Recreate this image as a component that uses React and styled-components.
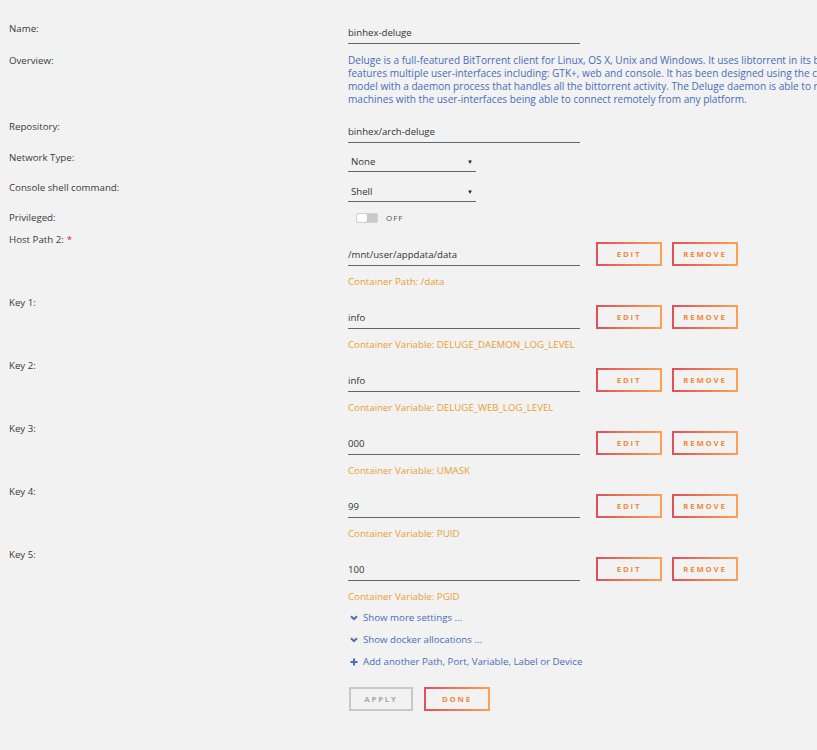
import React from "react";
import styled, { createGlobalStyle } from "styled-components";

const GlobalStyle = createGlobalStyle`
  html, body {
    margin: 0;
    background: #f2f2f2;
    overflow: hidden;
  }
  body {
    font-family: "Open Sans", "Liberation Sans", sans-serif;
    color: #3a3a3a;
  }
`;

const Page = styled.div`
  width: 817px;
  height: 750px;
  padding: 22px 0 0 9px;
  box-sizing: border-box;
  overflow: hidden;
`;

const Row = styled.div`
  display: grid;
  grid-template-columns: 339px auto;
  margin-bottom: ${(p) => p.$gap || 0}px;
`;

const Label = styled.div`
  font-size: 9.7px;
  line-height: 13px;
  color: #3a3a3a;
  white-space: nowrap;
`;

const Required = styled.span`
  color: #e22828;
  margin-left: 3px;
`;

const Value = styled.div`
  padding-top: ${(p) => p.$top || 0}px;
  min-width: 0;
`;

const TextInput = styled.div`
  width: 232px;
  height: 20px;
  line-height: 20px;
  border-bottom: 1px solid #666;
  font-size: 9.6px;
  color: #333;
  white-space: nowrap;
`;

const Select = styled.div`
  width: 128px;
  height: 20px;
  line-height: 20px;
  border-bottom: 1px solid #666;
  font-size: 9.6px;
  color: #333;
  padding: 0 3px;
  box-sizing: border-box;
  display: flex;
  justify-content: space-between;
  align-items: center;
`;

const Caret = styled.span`
  font-size: 6px;
  color: #222;
`;

const Description = styled.div`
  font-size: 10.1px;
  line-height: 13px;
  color: #486dba;
  span {
    display: block;
    white-space: nowrap;
  }
`;

const Switch = styled.div`
  display: flex;
  align-items: center;
  height: 13px;
  padding-left: 8px;
  gap: 8px;
`;

const Track = styled.div`
  width: 20px;
  height: 8px;
  border-radius: 2px;
  background: #c8c8c8;
  border: 1px solid #d2d2d2;
  position: relative;
`;

const Knob = styled.div`
  position: absolute;
  left: 0;
  top: 0;
  width: 10px;
  height: 8px;
  border-radius: 2px;
  background: #fff;
`;

const SwitchText = styled.span`
  font-size: 8px;
  letter-spacing: 1px;
  color: #555;
`;

const Line = styled.div`
  display: flex;
  align-items: flex-end;
`;

const Actions = styled.div`
  display: flex;
  gap: 10px;
  margin-left: 16px;
`;

const Button = styled.div`
  height: 24px;
  box-sizing: border-box;
  display: flex;
  align-items: center;
  justify-content: center;
  font-size: 7.8px;
  font-weight: 700;
  letter-spacing: 1.8px;
  color: ${(p) => (p.$disabled ? "#a8a8a8" : "#f08a3c")};
  border: 2px solid transparent;
  border-image: ${(p) =>
    p.$disabled
      ? "linear-gradient(90deg, #c8c8c8, #c8c8c8) 1"
      : "linear-gradient(90deg, #e0505a, #ffa050) 1"};
  width: ${(p) => p.$w || 66}px;
`;

const Hint = styled.div`
  margin-top: 9px;
  font-size: 9.7px;
  line-height: 13px;
  color: #e8a033;
  white-space: nowrap;
`;

const Links = styled.div`
  display: flex;
  flex-direction: column;
  gap: 9px;
  padding-left: 341px;
  margin-top: 8px;
`;

const LinkItem = styled.div`
  display: flex;
  align-items: center;
  gap: 5px;
  font-size: 9.7px;
  line-height: 13px;
  color: #486dba;
`;

const Footer = styled.div`
  display: flex;
  gap: 11px;
  padding-left: 340px;
  margin-top: 19px;
`;

const Chevron = () => (
  <svg width="8" height="6" viewBox="0 0 8 6">
    <path d="M1 1.2 L4 4.2 L7 1.2" fill="none" stroke="#486dba" strokeWidth="2" />
  </svg>
);

const Plus = () => (
  <svg width="8" height="8" viewBox="0 0 8 8">
    <path d="M4 0.5 V7.5 M0.5 4 H7.5" stroke="#486dba" strokeWidth="2" />
  </svg>
);

const configs = [
  { label: "Host Path 2:", required: true, value: "/mnt/user/appdata/data", hint: "Container Path: /data" },
  { label: "Key 1:", value: "info", hint: "Container Variable: DELUGE_DAEMON_LOG_LEVEL" },
  { label: "Key 2:", value: "info", hint: "Container Variable: DELUGE_WEB_LOG_LEVEL" },
  { label: "Key 3:", value: "000", hint: "Container Variable: UMASK" },
  { label: "Key 4:", value: "99", hint: "Container Variable: PUID" },
  { label: "Key 5:", value: "100", hint: "Container Variable: PGID" },
];

export default function App() {
  return (
    <Page>
      <GlobalStyle />
      <Row $gap={10}>
        <Label>Name:</Label>
        <Value $top={1}>
          <TextInput>binhex-deluge</TextInput>
        </Value>
      </Row>
      <Row $gap={14}>
        <Label>Overview:</Label>
        <Description>
          <span>Deluge is a full-featured BitTorrent client for Linux, OS X, Unix and Windows. It uses libtorrent in its backend and</span>
          <span>features multiple user-interfaces including: GTK+, web and console. It has been designed using the client server</span>
          <span>model with a daemon process that handles all the bittorrent activity. The Deluge daemon is able to run on headless</span>
          <span>machines with the user-interfaces being able to connect remotely from any platform.</span>
        </Description>
      </Row>
      <Row $gap={8}>
        <Label>Repository:</Label>
        <Value $top={2}>
          <TextInput>binhex/arch-deluge</TextInput>
        </Value>
      </Row>
      <Row $gap={9}>
        <Label>Network Type:</Label>
        <Value $top={1}>
          <Select>
            None <Caret>▼</Caret>
          </Select>
        </Value>
      </Row>
      <Row $gap={9}>
        <Label>Console shell command:</Label>
        <Value $top={1}>
          <Select>
            Shell <Caret>▼</Caret>
          </Select>
        </Value>
      </Row>
      <Row $gap={9}>
        <Label>Privileged:</Label>
        <Switch>
          <Track>
            <Knob />
          </Track>
          <SwitchText>OFF</SwitchText>
        </Switch>
      </Row>
      {configs.map((c) => (
        <Row key={c.label} $gap={8}>
          <Label>
            {c.label}
            {c.required && <Required>*</Required>}
          </Label>
          <Value $top={9}>
            <Line>
              <TextInput>{c.value}</TextInput>
              <Actions>
                <Button>EDIT</Button>
                <Button>REMOVE</Button>
              </Actions>
            </Line>
            <Hint>{c.hint}</Hint>
          </Value>
        </Row>
      ))}
      <Links>
        <LinkItem>
          <Chevron /> Show more settings ...
        </LinkItem>
        <LinkItem>
          <Chevron /> Show docker allocations ...
        </LinkItem>
        <LinkItem>
          <Plus /> Add another Path, Port, Variable, Label or Device
        </LinkItem>
      </Links>
      <Footer>
        <Button $disabled $w={64}>APPLY</Button>
        <Button>DONE</Button>
      </Footer>
    </Page>
  );
}
